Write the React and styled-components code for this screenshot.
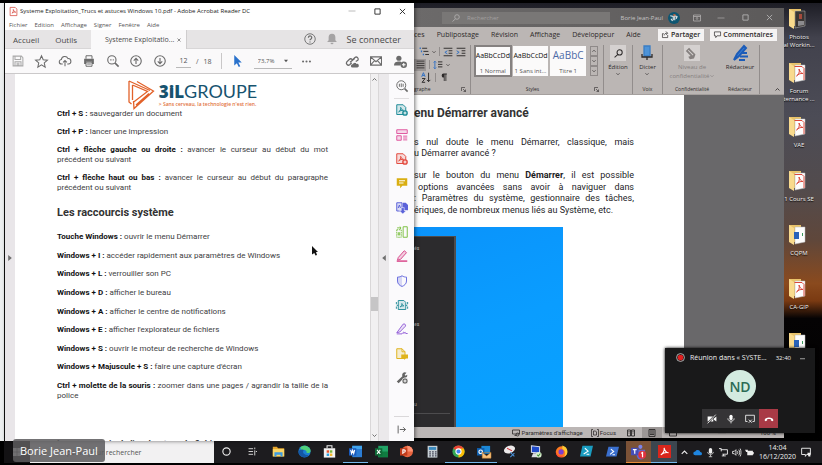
import React from 'react';
import styled, { createGlobalStyle, css } from 'styled-components';

const ui = '"Open Sans", "Noto Sans", sans-serif';
const doc = 'Roboto, "Liberation Sans", sans-serif';

const Global = createGlobalStyle`
  *, *::before, *::after { box-sizing: border-box; }
  body { margin: 0; background: #000; font-family: ${ui}; overflow: hidden; }
  button, input, select { font: inherit; color: inherit; margin: 0; padding: 0; border: 0; background: none; border-radius: 0; }
  h1, h2, p, ul { margin: 0; padding: 0; }
  svg { display: block; flex: none; overflow: visible; }
`;

/* ---------- shell ---------- */
const Screen = styled.div`
  position: relative;
  display: flex;
  flex-direction: column;
  height: 100vh;
  padding: 3px 0 2px;
  background: #000;
`;
const Desktop = styled.main`
  flex: 1;
  min-height: 0;
  display: grid;
  grid-template-columns: 5px minmax(0, 409fr) minmax(0, 370fr) 38px;
  background: linear-gradient(180deg, #1d1d25 0, #42424d 8%, #4c4c56 26%, #524b4d 42%, #5f473b 54%, #8a4a1e 64%, #7a3a12 68%, #050304 72%, #000 100%);
`;
const ShareEdge = styled.div`
  background: #eef0f1;
  border-right: 1px solid #111;
`;
const Row = styled.div`
  display: flex;
  align-items: center;
  gap: ${(p) => p.$gap || 0}px;
`;
const IconButton = styled.button`
  display: flex;
  align-items: center;
  justify-content: center;
  width: ${(p) => p.$w || 14}px;
  height: 14px;
  color: ${(p) => p.$color || '#6b6b6b'};
`;

/* ---------- Acrobat ---------- */
const Acrobat = styled.section`
  position: relative;
  z-index: 1;
  display: flex;
  flex-direction: column;
  min-height: 0;
  background: #fff;
  box-shadow: 1px 0 4px rgba(0, 0, 0, 0.55);
`;
const AcroTitle = styled.header`
  display: flex;
  align-items: center;
  gap: 2px;
  height: 16px;
  padding: 0 5px 0 4px;
  color: #222;
  font-size: 6px;
  white-space: nowrap;
  h1 { flex: 1; font-size: 6px; font-weight: 400; }
`;
const WindowButtons = styled.div`
  display: flex;
  gap: ${(p) => p.$gap}px;
`;
const AcroMenu = styled.nav`
  display: flex;
  align-items: center;
  gap: 7px;
  height: 11px;
  padding-left: 4px;
  font-size: 6px;
  color: #555;
`;
const TabBar = styled.div`
  display: flex;
  align-items: stretch;
  height: 19px;
  background: #e6e4e5;
  color: #4a4a4a;
  font-size: 8px;
  border-bottom: 1px solid #d8d6d7;
`;
const PlainTab = styled.button`
  padding: 0 8px;
`;
const ActiveTab = styled.div`
  display: flex;
  align-items: center;
  justify-content: space-between;
  width: 96px;
  margin: 0 0 -1px 6px;
  padding: 0 4px 0 14px;
  background: #faf9fa;
  border-right: 1px solid #cfcdce;
  font-size: 7px;
  white-space: nowrap;
`;
const TabRight = styled.div`
  display: flex;
  align-items: center;
  justify-content: flex-end;
  flex: 1;
  gap: 8px;
  padding-right: 13px;
  font-size: 9px;
`;
const AcroToolbar = styled.div`
  display: flex;
  align-items: center;
  height: 25px;
  padding: 0 7px 0 6px;
  background: #faf9fa;
  border-bottom: 1px solid #cbc9ca;
  color: #555;
  font-size: 7px;
`;
const FileTools = styled.div`
  display: flex;
  justify-content: space-between;
  width: 156px;
`;
const PageField = styled.label`
  display: flex;
  align-items: center;
  gap: 5px;
  margin-left: 9px;
  white-space: nowrap;
  input {
    width: 15px;
    height: 14px;
    border-bottom: 1px solid #b9b9b9;
    text-align: center;
  }
`;
const Rule = styled.span`
  width: 1px;
  height: ${(p) => p.$h}px;
  margin: 0 ${(p) => p.$m || 0}px;
  background: ${(p) => p.$color || '#c9c7c8'};
`;
const ZoomField = styled.label`
  display: flex;
  align-items: center;
  width: 38px;
  height: 15px;
  margin: 0 8px 0 9px;
  padding: 0 4px;
  border-bottom: 1px solid #b9b9b9;
  font-size: 6px;
  select { flex: 1; width: 20px; appearance: none; }
`;
const ShareTools = styled.div`
  display: flex;
  justify-content: space-between;
  width: 62px;
  margin-left: auto;
`;
const Viewer = styled.div`
  flex: 1;
  min-height: 0;
  display: grid;
  grid-template-columns: 10px minmax(0, 1fr) 9px 10px 25px;
`;
const Handle = styled.button`
  display: flex;
  align-items: center;
  justify-content: center;
  background: ${(p) => p.$bg};
  color: #6f6f6f;
`;
const PdfPage = styled.article`
  display: flex;
  flex-direction: column;
  min-height: 0;
  overflow: hidden;
  padding: 6px 42px 0;
  background: #fff;
  color: #3d3d42;
  font-family: ${doc};
  font-size: 8px;
  line-height: 10px;
`;
const Logo = styled.div`
  display: flex;
  align-items: center;
  justify-content: center;
  gap: 5px;
  height: 29px;
`;
const LogoName = styled.div`
  color: #17536f;
  font-family: Lato, sans-serif;
  font-size: 18px;
  line-height: 18px;
  b { font-family: "Open Sans", sans-serif; font-weight: 800; font-size: 17px; }
`;
const LogoTag = styled.div`
  color: #e2723c;
  font-family: "Open Sans", sans-serif;
  font-size: 5px;
  font-weight: 600;
  line-height: 6px;
  white-space: nowrap;
`;
const Shortcuts = styled.div`
  display: flex;
  flex-direction: column;
  justify-content: space-between;
  flex: ${(p) => p.$grow} 0 0;
`;
const Shortcut = styled.p`
  text-align: justify;
  b { color: #111; font-weight: 700; }
`;
const SectionTitle = styled.h2`
  margin: 11px 0;
  color: #333;
  font-size: 11px;
  line-height: 17px;
  font-weight: 700;
`;
const NextLine = styled.div`
  height: 40px;
  padding-top: 38px;
  font-weight: 700;
  font-size: 9px;
  white-space: nowrap;
`;
const Scrollbar = styled.div`
  display: flex;
  flex-direction: column;
  align-items: center;
  padding: 3px 0;
  background: #f1f0f1;
  border: solid #d9d7d8;
  border-width: 0 1px;
  color: #555;
`;
const Track = styled.div`
  flex: 1;
  display: flex;
  flex-direction: column;
  width: 100%;
  &::before { content: ''; flex: 216; }
  &::after { content: ''; flex: 122; }
`;
const Thumb = styled.span`
  height: 14px;
  background: #c6c5c6;
`;
const ToolsPane = styled.aside`
  display: flex;
  flex-direction: column;
  background: #fbfafc;
`;
const Tool = styled.button`
  display: flex;
  flex: 1 0 0;
  align-items: center;
  justify-content: center;
  margin: 0 5px;
  color: ${(p) => p.$color};
  ${(p) => p.$ruled && css`
    box-shadow: 0 1px 0 #e0dee0;
  `}
`;
const Collapse = styled.button`
  display: flex;
  align-items: center;
  justify-content: center;
  height: 25px;
  margin: 26px 5px 0;
  border-top: 1px solid #dad8da;
  color: #555;
`;

/* ---------- Word ---------- */
const Word = styled.section`
  display: flex;
  flex-direction: column;
  min-width: 0;
  min-height: 0;
  margin: 5px 0 3px;
  background: #bbb6b4;
  overflow: hidden;
  color: #2d2a2a;
  font-size: 7px;
`;
const WordTitle = styled.header`
  display: flex;
  align-items: center;
  height: 19px;
  padding: 0 8px 0 28px;
  background: linear-gradient(90deg, #6c6a6a, #626060 60%, #5c5a5a);
  color: #c4c2c2;
  white-space: nowrap;
`;
const WordSearch = styled.label`
  display: flex;
  align-items: center;
  gap: 7px;
  flex: 1;
  min-width: 0;
  height: 12px;
  padding: 0 10px;
  background: #797776;
  color: #aeabab;
  input { width: 60px; font-size: 6px; }
  input::placeholder { color: #a3a0a0; opacity: 1; }
`;
const UserName = styled.span`
  margin: 0 5px 0 11px;
  font-size: 6px;
`;
const WordTabs = styled.nav`
  display: flex;
  align-items: center;
  gap: 12px;
  height: 15px;
  padding-right: 7px;
  white-space: nowrap;
`;
const WordTab = styled.button`
  font-size: 7px;
`;
const TabActions = styled.div`
  display: flex;
  gap: 6px;
  margin-left: auto;
`;
const WhiteButton = styled.button`
  display: flex;
  align-items: center;
  justify-content: center;
  gap: 2px;
  height: 12px;
  padding: 0 4px;
  background: #f5f3f3;
  font-weight: 600;
`;
const Ribbon = styled.div`
  display: grid;
  grid-template-columns: 57px minmax(0, 1fr) 29px 30px 58px 39px 24px;
  height: 53px;
  border-bottom: 1px solid #a5a09e;
  font-size: 6px;
  line-height: 8px;
`;
const Group = styled.div`
  display: flex;
  flex-direction: column;
  align-items: center;
  min-width: 0;
  margin: 3px 0 1px;
  border-right: ${(p) => (p.$line ? '1px solid #928d8c' : 0)};
  color: ${(p) => (p.$muted ? '#85807f' : 'inherit')};
  text-align: center;
  white-space: nowrap;
`;
const GroupBody = styled.div`
  display: flex;
  flex-direction: column;
  align-items: ${(p) => p.$align || 'center'};
  flex: 1;
  width: 100%;
`;
const GroupName = styled.div`
  display: flex;
  align-items: center;
  justify-content: ${(p) => (p.$start ? 'space-between' : 'center')};
  width: 100%;
  height: 10px;
  padding-right: ${(p) => (p.$start ? 4 : 0)}px;
  color: #2d2a2a;
  font-size: 5px;
`;
const BigButton = styled.button`
  display: flex;
  flex-direction: column;
  align-items: center;
  gap: 1px;
`;
const IconTile = styled.span`
  display: flex;
  align-items: center;
  justify-content: center;
  width: 16px;
  height: 16px;
  margin-bottom: 1px;
  background: ${(p) => (p.$light ? '#d5d1d0' : 'transparent')};
`;
const ParaRow = styled.div`
  display: flex;
  align-items: center;
  gap: 3px;
  height: 13px;
  padding-left: ${(p) => p.$pad || 0}px;
`;
const Pressed = styled.span`
  display: flex;
  align-items: center;
  justify-content: center;
  width: 12px;
  height: 12px;
  background: #9c9796;
`;
const Gallery = styled.div`
  display: flex;
  gap: 2px;
  width: 100%;
  height: 31px;
  padding: 1px 5px 0 4px;
`;
const StyleCard = styled.button`
  flex: 1;
  min-width: 0;
  display: flex;
  flex-direction: column;
  align-items: center;
  justify-content: space-between;
  padding: 5px 0 1px;
  background: #fbfafa;
  overflow: hidden;
  outline: ${(p) => (p.$on ? '2px solid #858180' : '0')};
  outline-offset: -1px;
  color: #555;
  font-size: 6px;
  span { color: ${(p) => p.$ink || '#111'}; font-size: ${(p) => p.$size || 7}px; line-height: 9px; }
`;
const GalleryArrows = styled.div`
  display: grid;
  grid-template-rows: repeat(3, 1fr);
  width: 8px;
  margin-left: 2px;
  button { display: flex; align-items: center; justify-content: center; border: 1px solid #8f8a89; }
`;
const WordBody = styled.div`
  flex: 1;
  min-height: 0;
  display: grid;
  grid-template-columns: minmax(0, 270fr) minmax(0, 100fr);
  background: #69686a;
`;
const WordPage = styled.article`
  display: flex;
  flex-direction: column;
  min-height: 0;
  padding-right: 50px;
  background: #fff;
  color: #1d1d1f;
  font-family: ${doc};
  font-size: 9px;
  overflow: hidden;
  h2 { margin: 10px 0 16px; color: #333; font-size: 12px; line-height: 16px; }
`;
const Para = styled.p`
  margin-bottom: 11px;
  line-height: 11px;
`;
const Line = styled.span`
  display: block;
  height: ${(p) => p.$h || 11}px;
  padding-left: ${(p) => p.$pad || 0}px;
  white-space: nowrap;
  text-align-last: ${(p) => (p.$full ? 'justify' : 'left')};
`;
const Shot = styled.div`
  flex: 1;
  display: flex;
  width: 149px;
  padding-top: 9px;
  background: linear-gradient(160deg, #0a93fb, #0a9dff 50%, #08a2ff);
`;
const StartMenu = styled.div`
  display: flex;
  flex-direction: column;
  width: 42px;
  padding: 8px 4px 13px 0;
  background: #2c2b2d;
  border: solid #4e4c4d;
  border-width: 1px 2px 0 0;
  color: #bbb;
  font-size: 5px;
  line-height: 6px;
  hr { width: 100%; margin: 6px 0 0; border: 0; border-top: 1px solid #4d4c4e; }
  span:nth-of-type(2) { margin-top: 70px; }
  span:nth-of-type(3) { margin-top: auto; }
`;
const WordStatus = styled.footer`
  display: flex;
  align-items: center;
  justify-content: flex-end;
  height: 11px;
  padding-right: 8px;
  background: #bbb6b5;
  font-family: ${doc};
  font-size: 6px;
  white-space: nowrap;
`;
const StatusItem = styled.button`
  display: flex;
  align-items: center;
  justify-content: center;
  gap: 1px;
  height: 11px;
  padding: 0 ${(p) => p.$pad || 0}px;
  background: ${(p) => (p.$on ? '#9c9796' : 'transparent')};
`;

/* ---------- desktop icons ---------- */
const DesktopIcons = styled.ul`
  display: flex;
  flex-direction: column;
  overflow: hidden;
  padding-top: 5px;
  list-style: none;
`;
const DesktopIcon = styled.li`
  display: flex;
  flex-direction: column;
  align-items: center;
  flex: 0 0 54px;
  width: 30px;
  color: #f2f2f2;
  font-size: 6px;
  line-height: 8px;
  text-align: center;
  white-space: pre;
  text-shadow: 0 1px 1px #000;
  svg { margin: 0 4px 3px 0; }
`;

/* ---------- Teams ---------- */
const Teams = styled.section`
  position: absolute;
  z-index: 3;
  right: 7px;
  bottom: 32px;
  display: flex;
  flex-direction: column;
  align-items: center;
  width: 150px;
  height: 85px;
  background: #19191a;
  box-shadow: 0 0 3px #000;
  color: #f0f0f0;
`;
const TeamsTitle = styled.header`
  display: flex;
  align-items: center;
  gap: 5px;
  width: 100%;
  height: 19px;
  padding: 0 10px 0 11px;
  font-size: 7px;
  white-space: nowrap;
  span { flex: 1; }
  time { margin-right: 4px; font-size: 6px; }
`;
const Initials = styled.div`
  display: flex;
  align-items: center;
  justify-content: center;
  width: 32px;
  height: 32px;
  margin-top: 3px;
  border-radius: 50%;
  background: #d3ebe0;
  color: #2b6a55;
  font-size: 14px;
  font-weight: 600;
`;
const CallBar = styled.div`
  display: flex;
  margin-top: 7px;
`;
const CallButton = styled.button`
  display: flex;
  align-items: center;
  justify-content: center;
  width: 19px;
  height: 19px;
  background: ${(p) => (p.$end ? '#a93a46' : '#353436')};
  color: #fff;
`;

/* ---------- taskbar ---------- */
const Taskbar = styled.footer`
  display: flex;
  height: 22px;
  margin-left: 4px;
  background: #1d1c1f;
  color: #eee;
`;
const StartButton = styled.button`
  display: flex;
  align-items: center;
  justify-content: center;
  width: 26px;
  background: #131214;
`;
const TaskSearch = styled.label`
  display: flex;
  align-items: center;
  gap: 12px;
  width: 184px;
  padding-left: 10px;
  background: #f2f1f2;
  color: #555;
  font-size: 7px;
  input { flex: 1; min-width: 0; }
  input::placeholder { color: #555; opacity: 1; }
`;
const Apps = styled.div`
  display: flex;
  flex: 1;
`;
const TaskButton = styled.button`
  display: flex;
  flex: 1 1 0;
  align-items: center;
  justify-content: center;
  border-bottom: 1px solid transparent;
  ${(p) => p.$open && css`border-color: #76b9ed;`}
  ${(p) => p.$alert && css`background: #7b5237; border-color: #e88b38;`}
  ${(p) => p.$front && css`background: #3c464f;`}
`;
const Tray = styled.div`
  display: flex;
  align-items: center;
  width: 145px;
  padding: 0 10px 0 1px;
`;
const Clock = styled.time`
  flex: 1;
  font-size: 7px;
  line-height: 9px;
  text-align: center;
`;

/* ---------- overlays ---------- */
const SpeakerTag = styled.div`
  position: absolute;
  z-index: 4;
  left: 13px;
  bottom: 3px;
  height: 23px;
  padding: 0 7px;
  border-radius: 3px;
  background: rgba(92, 91, 93, 0.86);
  color: #fff;
  font-size: 11px;
  line-height: 23px;
`;
const Pointer = styled.div`
  position: absolute;
  z-index: 5;
  left: 38%;
  top: 53%;
`;

/* ---------- icons ---------- */
const I = ({ s = 12, v = 16, w = 1.3, children, ...r }) => (
  <svg width={s} height={s} viewBox={`0 0 ${v} ${v}`} fill="none" stroke="currentColor" strokeWidth={w} aria-hidden="true" {...r}>{children}</svg>
);
const fill = { fill: 'currentColor', stroke: 'none' };
const Chev = ({ up, s = 5 }) => <I s={s} v={10} w={1.6}><path d={up ? 'M1 7l4-4 4 4' : 'M1 3l4 4 4-4'} /></I>;
const Tri = ({ left, s = 6 }) => <I s={s} v={10}><path {...fill} d={left ? 'M8 0v10L2 5z' : 'M2 0v10l6-5z'} /></I>;
const Min = () => <I s={8}><path d="M1 8h14" /></I>;
const Max = () => <I s={7} w={2}><path d="M2 2h12v12H2z" /></I>;
const Close = () => <I s={7} w={2}><path d="M2 2l12 12M14 2L2 14" /></I>;
const Lens = ({ s = 8 }) => <I s={s} w={1.8}><circle cx="10" cy="6" r="4.6" /><path d="M7 9.5L1 15" /></I>;
const Launcher = () => <I s={5} v={10} w={1.2}><path d="M1 8V1h7M4 4l5 5M9 5v4H5" /></I>;
const Swirl = () => <path d="M5.2 11c2-1 3-4 2.4-6.6C9 8 10.5 9 12 9.2 9.500 8.700 7 9.500 5.200 11z" />;

const Save = () => <I w={1.4}><path d="M1.500 1.500h11l2 2v11h-13zM4 1.500v4.500h7.500V1.500M4 14.500V9h8v5.500M6 11h4M6 13h4" /></I>;
const Star = () => <I s={13} w={1.3}><path d="M8 1l2.100 4.800 5.200.5-3.900 3.500 1.100 5.100L8 12.200l-4.500 2.700 1.100-5.100L.7 6.300l5.200-.5z" /></I>;
const CloudUp = () => <I s={12} w={1.4}><path d="M5 12H3.500a3 3 0 01-.3-6A4.600 4.600 0 0112 4.800 3.600 3.600 0 0112.500 12H11M8 15V7.500M5.500 9.800L8 7.300l2.500 2.500" /></I>;
const Print = () => <I><path d="M4 5V1h8v4" /><path {...fill} d="M1.500 5h13v7H12V9H4v3H1.500z" /><path d="M4 9.500h8V15H4zM5.500 12h5" /></I>;
const ZoomOut = () => <I w={1.5}><circle cx="6.500" cy="6.500" r="5.500" /><path d="M10.500 10.500L15.500 15.500" strokeWidth="2.200" /><path d="M4 6.500h1M6 6.500h1M8 6.500h1" /></I>;
const Arr = ({ up }) => <I w={1.5}><circle cx="8" cy="8" r="7" /><path d={up ? 'M8 12V4.500M5 7.500l3-3 3 3' : 'M8 4v7.500M5 8.500l3 3 3-3'} /></I>;
const Arrow = () => <I s={12}><path fill="#2a72cc" stroke="none" d="M3 0l10 10H8.500l2.500 5-2 1-2.500-5L3 14z" /></I>;
const Dots = () => <I s={11}><g {...fill}><circle cx="3" cy="8" r="1.500" /><circle cx="8" cy="8" r="1.500" /><circle cx="13" cy="8" r="1.500" /></g></I>;
const LinkCloud = () => <I s={13} w={1.6}><path d="M7 9.500L4.500 12a2.500 2.500 0 01-3.500-3.500L4 5.500a2.500 2.500 0 013.500 0M8 6l3-3a2.500 2.500 0 013.500 3.500L12 8M5 9l6-5" /><path {...fill} d="M8 15.500a2 2 0 010-4 2.800 2.800 0 015-.5 2.200 2.200 0 011 4.500z" /></I>;
const Mail = () => <I s={12} w={1.4}><path d="M.7 2.500h14.600v11H.7zM.7 2.500L8 9l7.300-6.500M.7 13.500L6 7.500M15.300 13.500L10 7.500" /></I>;
const UserPlus = () => <I s={13}><circle {...fill} cx="6" cy="4" r="3.200" /><path {...fill} d="M0 13c0-4 3-5 6-5 1 0 2 .1 3 .6L8 13z" /><circle {...fill} cx="12" cy="12" r="4" /><path stroke="#fff" d="M12 9.800v4.400M9.800 12h4.400" /></I>;
const Help = () => <I s={12} w={1.2}><circle cx="8" cy="8" r="7" /><path d="M5.900 6.200a2.200 2.200 0 114 1.200C9.300 8.200 8 8.300 8 9.800M8 11.300v1.300" strokeWidth="1.600" /></I>;
const Bell = () => <I s={12}><path {...fill} d="M8 1c3.200 0 4.500 2.300 4.500 5v3.500l2 2.500h-13l2-2.500V6C3.500 3.300 4.800 1 8 1zM6 13h4a2 2 0 01-4 0z" /></I>;
const PdfMark = ({ s = 9 }) => <I s={s}><path fill="#fff" stroke="#d4453a" d="M2 .7h9l3 3v11.600H2z" /><g stroke="#d4453a"><Swirl /></g></I>;

const PageSwirl = ({ badge }) => (
  <><path fill="currentColor" fillOpacity=".18" d="M1 1h8.500L13 4.500V14H1z" /><path d="M3.500 10.500c2-.7 3.400-3.600 2.700-6C7.300 7.500 8.500 8.400 10 8.500 7.500 8.200 5.300 9 3.500 10.500z" /><circle cx="12" cy="12" r="3.800" fill={badge} stroke="none" /><path stroke="#fff" d="M10 12h4M12 10v4" /></>
);
const tools = [
  ['Rechercher', '#6b6b6b', <><circle cx="7" cy="7" r="6" /><path d="M11.500 11.500L15.500 15.500" strokeWidth="2.200" /><path d="M4.500 5v4M7 4.500v5M9.500 5v4" /></>],
  ['Exporter un PDF', '#1d8a97', <PageSwirl badge="#1d8a97" />],
  ['Modifier le PDF', '#e0579f', <><path fill="currentColor" fillOpacity=".2" d="M1 1h14v5H1zM1 9h6v6H1z" /><path d="M9.500 9.500H15M9.500 12H15M9.500 14.500H15" /></>],
  ['Créer un PDF', '#e2483d', <PageSwirl badge="#e2483d" />],
  ['Commentaire', '#d9ae12', <><path {...fill} d="M1 1.500h14v10H8.500L5.500 15v-3.500H1z" /><path stroke="#fff" d="M4 5h8M4 8h6" /></>],
  ['Combiner les fichiers', '#5b62d9', <><path fill="currentColor" fillOpacity=".2" d="M1 1h7v11H1z" /><path {...fill} d="M9 1h4l3 3v7H9z" /><path d="M3 8l1.500-4L6 8" /><path fill="currentColor" stroke="#fff" strokeWidth=".7" d="M7 7.500h4v4h2.500L9 16l-4.500-4.500H7z" /></>],
  ['Organiser les pages', '#7cc043', <><path strokeDasharray="2 1" d="M1 5h6v10H1z" /><path d="M9.500 1H15v14H9.500zM1.500 2.500h5M5 .8l1.800 1.700L5 4.200M3 9h2v3H3z" /></>],
  ['Biffer', '#d84a8c', <><path fill="currentColor" fillOpacity=".25" d="M3 10l8-9 3 2.500-8 9-4 1z" /><path d="M1 14.800h14" strokeWidth="2" /></>],
  ['Protéger', '#6a6ede', <><path d="M8 1c2 1.500 4 1.800 6 1.800V8c0 4-3 6-6 7.300C5 14 2 12 2 8V2.800C4 2.800 6 2.500 8 1z" /><path fill="currentColor" fillOpacity=".25" stroke="none" d="M8 1v14.300C5 14 2 12 2 8V2.800z" /></>],
  ['Optimiser le PDF', '#2a8f9b', <><path fill="currentColor" fillOpacity=".18" d="M3 2h7.500L13 4.500V14H3z" /><path d="M.5 4v3M15.500 4v3M.5 10v3M15.500 10v3M1 8.500h2M13 8.500h2" /><path d="M5.500 10.500c1.500-.7 2.600-2.500 2.300-4.500.7 2 1.700 3 2.700 3-2-.1-3.500.5-5 1.500z" /></>],
  ['Remplir et signer', '#9461d8', <><path fill="currentColor" fillOpacity=".15" d="M1 13L9.500 1.500c2-1 4 .8 3 2.800L5 12z" /><path d="M1 14.500h7c2-3 2.500-3 2.500-.5 1.500-2.500 2-2 2.500 0h2.500" /></>],
  ['Envoyer pour révision', '#dfb31c', <><path fill="currentColor" fillOpacity=".2" d="M1 1h7l4 4v9H1zM8 1v4h4" /><path {...fill} d="M7 8.500h9V14h-3l-2 2v-2H7z" /></>],
  ["Plus d'outils", '#656565', <><path {...fill} d="M9 1.500a4 4 0 015-.5l-2.500 2.500 1 1.500L15 3.500c.5 2.500-1.500 4.500-4 4L3.500 15 1 12.500 8.500 5.500c-.5-1.500-.2-3 .5-4z" /><circle cx="12" cy="12" r="4" fill="currentColor" stroke="#fff" strokeWidth=".8" /><path stroke="#fff" d="M10 12h4M12 10v4" /></>],
];

const Folder = ({ kind }) => (
  <svg width="18" height="22" viewBox="0 0 18 22" aria-hidden="true">
    <path fill="#e9c36a" d="M1 1h12v17H1z" />
    <path fill={kind === 'photo' ? '#3a3634' : '#fdfdfd'} stroke="#bbb" strokeWidth=".5" d="M7 3h10v15l-10 2z" />
    {kind === 'photo' && <><path fill="#a44a3c" d="M11 6h3v5h-3z" /><path fill="#8c8b8e" d="M10 13h6v4l-6 1z" /></>}
    {kind === 'pdf' && <path fill="none" stroke="#d9483b" d="M6.500 4.500H14l2 2V18M8.500 14c2-1 3.500-4 2.500-7 1 3 2 4 4 4.500-3-.3-5 .8-6.500 2.500z" />}
    {kind === 'word' && <><path fill="#2a62b8" d="M6 8h5v7H6z" /><path fill="#3b9a5c" d="M14 9h1v3h-1z" /></>}
    <path fill="#f9da8d" d="M1 1l5 3v17l-5-3z" />
  </svg>
);

const appIcons = [
  { n: 'Cortana', i: <I s={9} w={2}><circle cx="8" cy="8" r="6.500" /></I> },
  { n: 'Applications actives', i: <I s={9} w={1.5}><path d="M1 3h8M1 8h8M1 13h8M12 1v3M12 6v9M14 8h2" /></I> },
  { n: 'Explorateur', i: <I s={13}><path fill="#e6a52c" stroke="none" d="M1 2h5l1.500 2H15v10H1z" /><path fill="#fbd667" stroke="none" d="M1 5h14v9H1z" /><path fill="#3d9be0" stroke="none" d="M3 9h10v5h-2.500v-2h-5v2H3z" /></I> },
  { n: 'Edge', i: <I s={13}><circle cx="8" cy="8" r="7.500" fill="#1a7fd4" stroke="none" /><path fill="#4fd07a" stroke="none" d="M3 2.500C8-1 15 2 15.500 7c0 3-3 3.500-5 2.500 1-3-3-5-7-3z" /><path fill="#1456a5" stroke="none" d="M.6 9C1 5 6 5 7 6.500 5 9 7 12.500 13 12.500 9 17 1 15 .6 9z" /></I> },
  { n: 'Store', i: <I s={13}><path stroke="#eee" d="M5 4V1h6v3" /><path fill="#f3f3f3" stroke="none" d="M1 4h14v11.500H1z" /><path fill="#e6532d" stroke="none" d="M4.500 6.500h3v3h-3z" /><path fill="#7ab83b" stroke="none" d="M8.500 6.500h3v3h-3z" /><path fill="#2a9fe0" stroke="none" d="M4.500 10.500h3v3h-3z" /><path fill="#f5b92e" stroke="none" d="M8.500 10.500h3v3h-3z" /></I> },
  { n: 'Word', open: 1, i: <I s={13}><path fill="#2b7cd3" stroke="none" d="M4 1h12v14H4z" /><path fill="#41a5ee" stroke="none" d="M4 1h12v4H4z" /><path fill="#185abd" stroke="none" d="M0 4h9v9H0z" /><path stroke="#fff" d="M2 6l1.200 4.500L4.500 6.500l1.300 4L7 6" /></I> },
  { n: 'Excel', i: <I s={13}><path fill="#21a366" stroke="none" d="M4 1h12v14H4z" /><path fill="#107c41" stroke="none" d="M4 8h12v7H4z" /><path fill="#0f6a37" stroke="none" d="M0 4h9v9H0z" /><path stroke="#fff" d="M2.500 6l4 5M6.500 6l-4 5" /></I> },
  { n: 'PowerPoint', i: <I s={13}><circle cx="9" cy="8" r="7" fill="#e8643f" stroke="none" /><path fill="#ff9272" stroke="none" d="M9 1a7 7 0 017 7H9z" /><path fill="#c13b1b" stroke="none" d="M0 4h9v9H0z" /><path stroke="#fff" d="M3.500 11V6h1.500a1.500 1.500 0 010 3H3.500" /></I> },
  { n: 'Calculatrice', i: <I s={13}><path fill="#c9d1d6" stroke="none" d="M2 1h12v14.500H2z" /><path fill="#3a89bd" stroke="none" d="M3.500 2.500h9V6h-9z" /><path stroke="#445" strokeDasharray="2 1.500" strokeWidth="1.600" d="M4 8.500h9M4 11h9M4 13.500h9" /></I> },
  { n: 'Chrome', open: 1, i: <I s={13}><circle cx="8" cy="8" r="7.500" fill="#34a853" stroke="none" /><path fill="#ea4335" stroke="none" d="M1.500 4.300A7.500 7.500 0 0114.500 4.300L8 8z" /><path fill="#fbbc05" stroke="none" d="M14.500 4.300A7.500 7.500 0 018 15.500L8 8V4.300z" /><circle cx="8" cy="8" r="3.200" fill="#4285f4" stroke="#fff" /></I> },
  { n: 'Outlook', open: 1, i: <I s={14}><path fill="#1b87d6" stroke="none" d="M5 1h10v9H5z" /><path fill="#0f5fae" stroke="none" d="M0 3.500h8.500V12H0z" /><circle cx="4.200" cy="7.700" r="2" stroke="#fff" /><path fill="#f8c27d" stroke="#c98331" strokeWidth=".6" d="M6 8.500h10V15H6zl5 4 5-4" /></I> },
  { n: 'Outil Capture', i: <I s={13}><ellipse cx="8" cy="5.500" rx="7" ry="4.500" fill="#ece9ea" stroke="none" transform="rotate(-20 8 5.500)" /><path stroke="#d0343c" d="M5 4l6 3" /><path stroke="#4a8fd6" d="M9 9l5 5M14 10l-5 5" /></I> },
  { n: 'Bureau à distance', i: <I s={13}><path fill="#1f49c9" stroke="#cfd6ea" d="M3 1l10 1v8L3 9z" /><path fill="#dcdde2" stroke="none" d="M5 10h6l1 5H3z" /><circle cx="12" cy="12" r="3.500" fill="#d9efcf" stroke="none" /><path stroke="#3c8b35" d="M10 12l1.500 1.500L14 10.500" /></I> },
  { n: 'Firefox', i: <I s={13}><circle cx="8" cy="8.500" r="7" fill="#ff7a1f" stroke="none" /><path fill="#ffc933" stroke="none" d="M9 .5c4 1 6.500 4 6.300 8-.2 3-2 5-4 6C14 10 12 6 9 5z" /><circle cx="7.500" cy="8.500" r="3.200" fill="#7a3fd0" stroke="none" /><path fill="#ff4438" stroke="none" d="M1 6c0 6 5 8.500 10 6.500C9 16 1 16.500 1 8z" /></I> },
  { n: 'PowerShell ISE', i: <I s={13}><path fill="#1a9cc0" stroke="none" d="M3 1h13l-3 13H0z" /><path stroke="#fff" d="M6 4l4 3.500L4.500 11M8 11.500h3.500" /></I> },
  { n: 'PowerShell', i: <I s={13}><path fill="#3a6fce" stroke="none" d="M3 2h13l-3 12H0z" /><path stroke="#fff" d="M6 5l3.500 3L5 11.500M8 12h3" /></I> },
  { n: 'Teams', alert: 1, i: <I s={15}><circle cx="10" cy="3" r="2.200" fill="#7b83eb" stroke="none" /><path fill="#6068cf" stroke="none" d="M6 6h9v6a4 4 0 01-9 0z" /><path fill="#464eb8" stroke="none" d="M0 4h8v8H0z" /><path stroke="#fff" d="M2 6h4M4 6v4.500" /><circle cx="12" cy="11.500" r="4.200" fill="#e0323c" stroke="none" /><path stroke="#fff" d="M11 10l1.300-.8v5" /></I> },
  { n: 'Acrobat Reader', front: 1, open: 1, i: <I s={13}><path fill="#d9261c" stroke="none" d="M0 0h16v16H0z" /><path stroke="#fff" d="M3.500 12c2.500-1 4.800-5 4-8.500 1 4 3 6 5.500 6-3-.5-7 .5-9.500 2.500z" /></I> },
];

const folders = [
  ['photo', 'Photos\nal Workin...'], ['pdf', 'Forum\nternance ...'], ['pdf', 'VAE'], ['pdf', '1 Cours SE'],
  ['word', 'CQPM'], ['pdf', 'CA-GIP'], ['word', ''],
];
const general = [
  ['Ctrl + S :', 'sauvegarder un document'],
  ['Ctrl + P :', 'lancer une impression'],
  ['Ctrl + flèche gauche ou droite :', 'avancer le curseur au début du mot précédent ou suivant'],
  ['Ctrl + flèche haut ou bas :', 'avancer le curseur au début du paragraphe précédent ou suivant'],
];
const system = [
  ['Touche Windows :', 'ouvrir le menu Démarrer'],
  ['Windows + I :', 'accéder rapidement aux paramètres de Windows'],
  ['Windows + L :', 'verrouiller son PC'],
  ['Windows + D :', 'afficher le bureau'],
  ['Windows + A :', 'afficher le centre de notifications'],
  ['Windows + E :', "afficher l'explorateur de fichiers"],
  ['Windows + S :', 'ouvrir le moteur de recherche de Windows'],
  ['Windows + Majuscule + S :', "faire une capture d'écran"],
  ['Ctrl + molette de la souris :', 'zoomer dans une pages / agrandir la taille de la police'],
];
const ShortcutList = ({ items, grow }) => (
  <Shortcuts $grow={grow}>
    {items.map(([k, t]) => <Shortcut key={k}><b>{k}</b> {t}</Shortcut>)}
  </Shortcuts>
);

function AcrobatWindow() {
  return (
    <Acrobat>
      <AcroTitle>
        <PdfMark />
        <h1>Systeme Exploitation_Trucs et astuces Windows 10.pdf - Adobe Acrobat Reader DC</h1>
        <WindowButtons $gap={11}>
          <IconButton $color="#999" aria-label="Réduire"><Min /></IconButton>
          <IconButton $color="#222" aria-label="Agrandir"><Max /></IconButton>
          <IconButton $color="#222" aria-label="Fermer"><Close /></IconButton>
        </WindowButtons>
      </AcroTitle>
      <AcroMenu>
        {['Fichier', 'Edition', 'Affichage', 'Signer', 'Fenêtre', 'Aide'].map((m) => <button key={m}>{m}</button>)}
      </AcroMenu>
      <TabBar>
        <PlainTab>Accueil</PlainTab>
        <PlainTab>Outils</PlainTab>
        <ActiveTab>Systeme Exploitatio... <IconButton $w={6} aria-label="Fermer l'onglet"><I s={4} w={3}><path d="M2 2l12 12M14 2L2 14" /></I></IconButton></ActiveTab>
        <TabRight>
          <IconButton aria-label="Aide"><Help /></IconButton>
          <IconButton $color="#a5a3a4" aria-label="Notifications"><Bell /></IconButton>
          <button>Se connecter</button>
        </TabRight>
      </TabBar>
      <AcroToolbar>
        <FileTools>
          <IconButton $color="#a9a9a9" aria-label="Enregistrer"><Save /></IconButton>
          <IconButton aria-label="Favori"><Star /></IconButton>
          <IconButton aria-label="Envoyer"><CloudUp /></IconButton>
          <IconButton aria-label="Imprimer"><Print /></IconButton>
          <IconButton aria-label="Zoom arrière"><ZoomOut /></IconButton>
          <IconButton aria-label="Page précédente"><Arr up /></IconButton>
          <IconButton aria-label="Page suivante"><Arr /></IconButton>
        </FileTools>
        <PageField><input aria-label="Page" defaultValue="12" /> <span>/</span> <span>18</span></PageField>
        <Rule $h={16} $m={9} />
        <IconButton aria-label="Sélection"><Arrow /></IconButton>
        <ZoomField>
          <select aria-label="Zoom"><option>73,7%</option></select>
          <I s={4} v={10}><path {...fill} d="M0 2h10L5 8z" /></I>
        </ZoomField>
        <IconButton aria-label="Plus"><Dots /></IconButton>
        <ShareTools>
          <IconButton aria-label="Lien"><LinkCloud /></IconButton>
          <IconButton aria-label="Courriel"><Mail /></IconButton>
          <IconButton aria-label="Inviter"><UserPlus /></IconButton>
        </ShareTools>
      </AcroToolbar>
      <Viewer>
        <Handle $bg="#e9e6e9" aria-label="Volet gauche"><Tri /></Handle>
        <PdfPage>
          <Logo>
            <svg width="26" height="29" viewBox="0 0 26 29" fill="none" stroke="#e2622a" strokeWidth="1.300" aria-hidden="true">
              <path d="M1 1v21l2.500 2M1 1l21 9.500M9 1.500L25.500 11 6 28.500 5.500 21M4.500 5v15M4.500 5l15 6.500L5 22.500M8 25l13-11.500" />
            </svg>
            <div>
              <LogoName><b>3iL</b>GROUPE</LogoName>
              <LogoTag>&gt; Sans cerveau, la technologie n'est rien.</LogoTag>
            </div>
          </Logo>
          <ShortcutList items={general} grow={85} />
          <SectionTitle>Les raccourcis système</SectionTitle>
          <ShortcutList items={system} grow={171} />
          <NextLine>Les raccourcis de l'explorateur de fichiers</NextLine>
        </PdfPage>
        <Scrollbar><Chev up /><Track><Thumb /></Track><Chev /></Scrollbar>
        <Handle $bg="#ebe9eb" aria-label="Volet droit"><Tri left /></Handle>
        <ToolsPane>
          {tools.map(([n, c, d], k) => (
            <Tool key={n} $color={c} $ruled={k === 0} aria-label={n}><I s={12} w={1.3}>{d}</I></Tool>
          ))}
          <Collapse aria-label="Masquer le volet"><I s={9} w={1.6}><path d="M2 1v14M5 8h10M11 4l4 4-4 4" /></I></Collapse>
        </ToolsPane>
      </Viewer>
    </Acrobat>
  );
}

function WordWindow() {
  const blue = '#2f6fc4';
  return (
    <Word>
      <WordTitle>
        <WordSearch><Lens /><input aria-label="Rechercher" placeholder="Rechercher" /></WordSearch>
        <UserName>Borie Jean-Paul</UserName>
        <svg width="12" height="12" viewBox="0 0 16 16" aria-hidden="true"><circle cx="8" cy="8" r="8" fill="#0e5672" /><path d="M3 5l4 1v5M9 11V5l3 1-1 3M4 9l2 3" stroke="#e6e6e6" strokeWidth="1.500" fill="none" /><path d="M7 3h3v2H7z" fill="#d9663a" /></svg>
        <Row $gap={10}>
          <span />
          <IconButton $color="#b4b2b2" aria-label="Options du ruban"><I s={8} w={1.5}><path d="M1 2h14v12H1zM1 5h14M8 12V7M6 9l2-2 2 2" /></I></IconButton>
          <IconButton $color="#b4b2b2" aria-label="Réduire"><Min /></IconButton>
          <IconButton $color="#b4b2b2" aria-label="Agrandir"><Max /></IconButton>
          <IconButton $color="#b4b2b2" aria-label="Fermer"><Close /></IconButton>
        </Row>
      </WordTitle>
      <WordTabs>
        {['ces', 'Publipostage', 'Révision', 'Affichage', 'Développeur', 'Aide'].map((t) => <WordTab key={t}>{t}</WordTab>)}
        <TabActions>
          <WhiteButton><I s={7} w={1.6}><path d="M4 6H1v9h12V9M5 10c0-4 3-5 7-5M9 1l4 4-4 4" /></I>Partager</WhiteButton>
          <WhiteButton><I s={7} w={1.6}><path d="M1 2h14v9H7l-3 4v-4H1z" /></I>Commentaires</WhiteButton>
        </TabActions>
      </WordTabs>
      <Ribbon>
        <Group $line>
          <GroupBody $align="flex-start">
            <ParaRow $pad={5}>
              <I s={10} w={1.5}><path d="M1 2h2M3 7h2M6 12h2" stroke={blue} strokeWidth="2.500" /><path d="M5 2h8M7 7h8M10 12h6" /></I>
              <Chev s={4} /><Rule $h={9} $color="#928d8c" />
              {['M7 6L3 8.500 7 11', 'M1 6l4 2.500L1 11'].map((d) => (
                <I key={d} s={10} w={1.5}><path d="M1 2h14M9 6h6M9 10h6M1 14h14" /><path stroke={blue} d={d} /></I>
              ))}
            </ParaRow>
            <ParaRow>
              <Pressed><I s={9} w={1.5}><path d="M1 2h14M1 6h14M1 10h14M1 14h14" /></I></Pressed>
              <Rule $h={9} $color="#928d8c" />
              <I s={10} w={1.5}><path stroke={blue} d="M3 2v12M1 4l2-2 2 2M1 12l2 2 2-2" /><path d="M8 3h7M8 7h7M8 11h7" /></I><Chev s={4} />
            </ParaRow>
            <ParaRow $pad={7}>
              <I s={11} w={1.4}><path stroke={blue} d="M1 7l2.500-6L6 7M2 5h3" /><path d="M1.500 9.500H6L1.500 15H6M11 1v13M8.500 11.500L11 14l2.500-2.500" /></I>
              <Rule $h={9} $color="#928d8c" />
              <I s={9}><path {...fill} d="M8 1h6v1.500h-1V14h-1.500V2.500H10V14H8.500V8A3.500 3.500 0 018 1z" /></I>
            </ParaRow>
          </GroupBody>
          <GroupName $start>graphe<Launcher /></GroupName>
        </Group>
        <Group $line>
          <GroupBody>
            <Gallery>
              <StyleCard $on><span>AaBbCcDd</span>1 Normal</StyleCard>
              <StyleCard><span>AaBbCcDd</span>1 Sans int...</StyleCard>
              <StyleCard $ink="#4d6aa6" $size={10}><span>AaBbC</span>Titre 1</StyleCard>
              <GalleryArrows>
                <button aria-label="Styles précédents"><Chev up s={4} /></button>
                <button aria-label="Styles suivants"><Chev s={4} /></button>
                <button aria-label="Tous les styles"><Chev s={4} /></button>
              </GalleryArrows>
            </Gallery>
          </GroupBody>
          <GroupName $start><span />Styles<Launcher /></GroupName>
        </Group>
        <Group $line>
          <BigButton><IconTile $light><Lens s={9} /></IconTile>Édition<Chev s={4} /></BigButton>
        </Group>
        <Group $line>
          <GroupBody><BigButton><IconTile><I s={16}><path fill="#4d93d8" stroke="#3a7dc4" d="M5 1h6v10H5z" /><path d="M3 9v3h10V9M8 12v3" /></I></IconTile>Dicter<Chev s={4} /></BigButton></GroupBody>
          <GroupName>Voix</GroupName>
        </Group>
        <Group $muted>
          <GroupBody><BigButton><IconTile $light><I s={13}><path {...fill} d="M1 5l4-4 8 8-2 5-5 1-2-3 3-1z" /><path stroke="#d5d1d0" d="M4 4l6 6M7 2l7 7" /></I></IconTile>Niveau de<Row $gap={1}>confidentialité <Chev s={4} /></Row></BigButton></GroupBody>
          <GroupName>Confidentialité</GroupName>
        </Group>
        <Group $line>
          <GroupBody><BigButton><IconTile><I s={16} w={2}><path stroke="#1c5cb8" d="M2 15L5 9l7-8 2 2-7 8z" fill="#3f86dc" /><path stroke="#1c5cb8" d="M10 8h5M8 11.500h8M7 15h6" /></I></IconTile>Rédacteur</BigButton></GroupBody>
          <GroupName>Rédacteur</GroupName>
        </Group>
        <Group>
          <GroupBody />
          <GroupName $start><span /><span /><Chev up s={5} /></GroupName>
        </Group>
      </Ribbon>
      <WordBody>
        <WordPage>
          <h2>enu Démarrer avancé</h2>
          <Para>
            <Line $full>s nul doute le menu Démarrer, classique, mais</Line>
            <Line>u Démarrer avancé ?</Line>
          </Para>
          <Para>
            <Line $full $h={12}>sur le bouton du menu <b>Démarrer</b>, il est possible</Line>
            <Line $full $pad={4}>options avancées sans avoir à naviguer dans</Line>
            <Line $full $h={12}>: Paramètres du système, gestionnaire des tâches,</Line>
            <Line>ériques, de nombreux menus liés au Système, etc.</Line>
          </Para>
          <Shot>
            <StartMenu><span>és</span><span>es</span><span>u</span><hr /></StartMenu>
          </Shot>
        </WordPage>
        <div />
      </WordBody>
      <WordStatus>
        <StatusItem $pad={4}><I s={8} w={1.6}><path d="M1 2h14v8H1zM5 13h4" /><circle cx="11" cy="11" r="3" /></I>Paramètres d'affichage</StatusItem>
        <StatusItem $pad={4}><I s={8} w={1.5}><path d="M4 1H1v14h3M12 1h3v14h-3M5 4h4l2 2v6H5z" /></I>Focus</StatusItem>
        <StatusItem $pad={7} aria-label="Mode Lecture"><I s={8} w={1.8}><path d="M1 2h6v12H1zM9 2h6v12H9zM3 5h2M3 8h2M11 5h2M11 8h2" /></I></StatusItem>
        <StatusItem $pad={6} $on aria-label="Page"><I s={8} w={1.8}><path d="M2 1h12v14H2zM4 4h8M4 8h8M4 11h8" /></I></StatusItem>
        <StatusItem $pad={7} aria-label="Web"><I s={8} w={1.8}><path d="M1 2h14v12H1zM1 5h14" /></I></StatusItem>
        <StatusItem $pad={13} aria-label="Curseur de zoom"><I s={50} v={50} height={8}><path strokeWidth="1" d="M0 25h50" /></I></StatusItem>
        <StatusItem>100 %</StatusItem>
      </WordStatus>
    </Word>
  );
}

function TeamsWindow() {
  return (
    <Teams>
      <TeamsTitle>
        <I s={9}><circle cx="8" cy="8" r="7" stroke="#ddd" /><circle cx="8" cy="8" r="5" fill="#e02020" stroke="none" /></I>
        <span>Réunion dans « SYSTE...</span><time>32:40</time><I s={5} w={2}><path d="M0 12h16" /></I>
      </TeamsTitle>
      <Initials>ND</Initials>
      <CallBar>
        <CallButton aria-label="Caméra"><I s={10}><path {...fill} d="M1 4h9v8H1zM11 7l4-3v8l-4-3z" /><path stroke="#353436" strokeWidth="3" d="M1 15L14 1" /><path d="M1 15L14 1" /></I></CallButton>
        <CallButton aria-label="Micro"><I s={10}><rect {...fill} x="5.500" y="1" width="5" height="8.500" rx="2.500" /><path d="M3 7c0 6 10 6 10 0M8 12v3" /></I></CallButton>
        <CallButton aria-label="Partage"><I s={10}><path d="M4 12H1V2h14v10h-3M6 9l5 5M11 9l-5 5" /></I></CallButton>
        <CallButton $end aria-label="Raccrocher"><I s={10}><path {...fill} d="M1 10c0-6 14-6 14 0l-1 1.500-3-1V8.500C9.500 8 6.500 8 5 8.500v2l-3 1z" /></I></CallButton>
      </CallBar>
    </Teams>
  );
}

export default function App() {
  return (
    <Screen>
      <Global />
      <Desktop>
        <ShareEdge />
        <AcrobatWindow />
        <WordWindow />
        <DesktopIcons>
          {folders.map(([k, t], n) => <DesktopIcon key={n}><Folder kind={k} />{t}</DesktopIcon>)}
        </DesktopIcons>
      </Desktop>
      <Taskbar>
        <StartButton aria-label="Démarrer"><I s={8}><path {...fill} d="M0 0h7.500v7.500H0zM8.500 0H16v7.500H8.500zM0 8.500h7.500V16H0zM8.500 8.500H16V16H8.500z" /></I></StartButton>
        <TaskSearch><Lens s={7} /><input aria-label="Recherche Windows" placeholder="Taper ici pour rechercher" /></TaskSearch>
        <Apps>
          {appIcons.map((a) => <TaskButton key={a.n} aria-label={a.n} $open={a.open} $alert={a.alert} $front={a.front}>{a.i}</TaskButton>)}
        </Apps>
        <Tray>
          <IconButton $w={13} $color="#eee" aria-label="Icônes cachées"><Chev up s={7} /></IconButton>
          <IconButton $w={13} $color="#1f86e0" aria-label="OneDrive"><I s={9}><path {...fill} d="M4 13a3.500 3.500 0 010-7 5 5 0 019 1 3 3 0 010 6z" /></I></IconButton>
          <IconButton $w={13} $color="#eee" aria-label="Micro"><I s={9}><rect {...fill} x="5" y="0" width="6" height="10" rx="3" /><path d="M3 7c0 6 10 6 10 0M8 12v3M5 15.500h6" /></I></IconButton>
          <IconButton $w={13} $color="#eee" aria-label="Réseau"><I s={9} w={1.6}><path d="M3 3h12v8H6M0 1h4v5M8 11v3M5 14h7" /></I></IconButton>
          <IconButton $w={13} $color="#eee" aria-label="Volume"><I s={9} w={1.5}><path d="M1 6h3l3-3v10l-3-3H1zM9.500 5.500c1 1.500 1 3.500 0 5M12 3c2 3 2 7 0 10M14.500 1c2 4 2 10 0 14" /></I></IconButton>
          <IconButton $w={13} $color="#eee" aria-label="Batterie"><I s={9}><path {...fill} d="M4 5h10v2h1.500v4H14v2H4zM0 3h5v4H2z" /></I></IconButton>
          <Clock>14:04<br />16/12/2020</Clock>
          <IconButton $w={13} $color="#eee" aria-label="Notifications"><I s={10} w={1.5}><path d="M1 2h14v10H9l-2 3v-3H1z" /><path {...fill} d="M10 9h5v6h-3z" /></I></IconButton>
        </Tray>
      </Taskbar>
      <TeamsWindow />
      <SpeakerTag>Borie Jean-Paul</SpeakerTag>
      <Pointer>
        <svg width="7" height="10" viewBox="0 0 7 10" aria-hidden="true"><path d="M0 0l6 6H4l1 3-1.500.6L2.300 7 0 8.500z" fill="#111" /></svg>
      </Pointer>
    </Screen>
  );
}
